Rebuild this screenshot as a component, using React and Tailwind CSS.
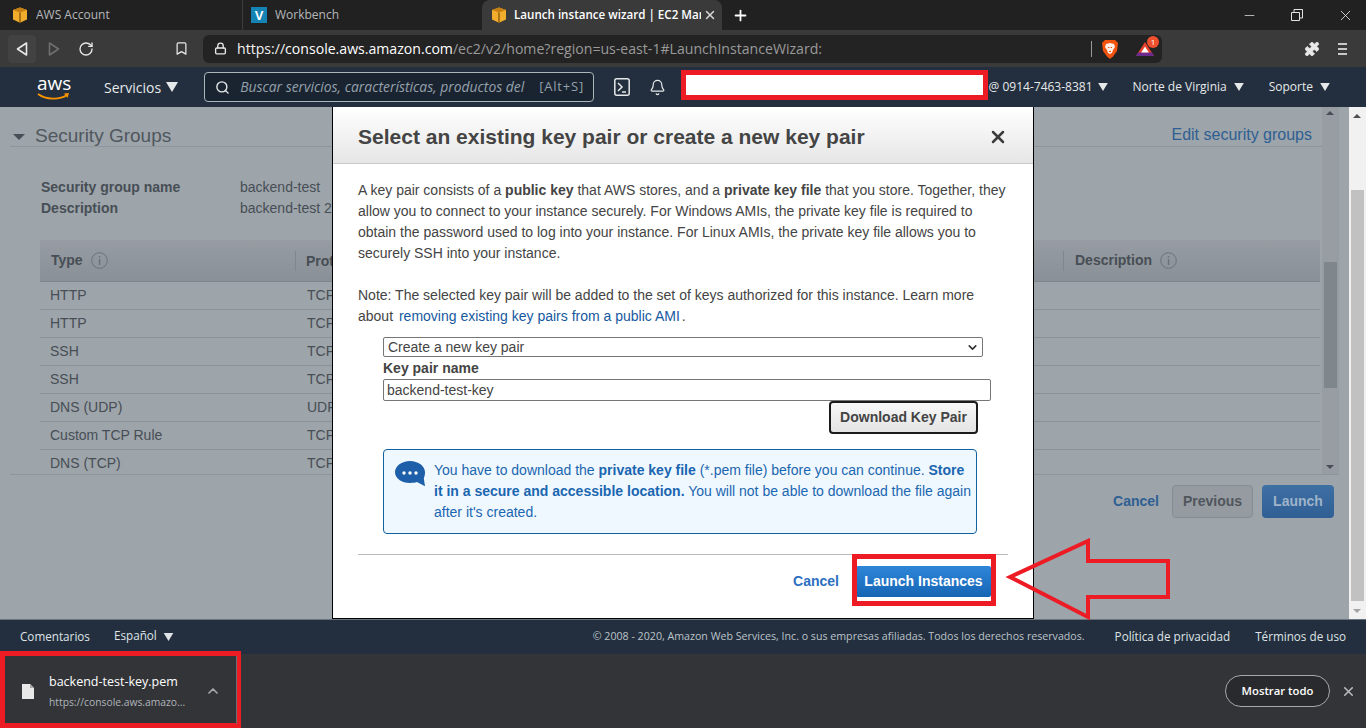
import { Lock, Bookmark, RotateCw, Search, Bell, Puzzle, Plus, X, ChevronUp, ChevronDown, Minus } from 'lucide-react';

const UI = 'font-["Open_Sans",sans-serif]';
const ARIAL = 'font-["Liberation_Sans",Arial,sans-serif]';

const rows = [
  ['HTTP', 'TCP'],
  ['HTTP', 'TCP'],
  ['SSH', 'TCP'],
  ['SSH', 'TCP'],
  ['DNS (UDP)', 'UDP'],
  ['Custom TCP Rule', 'TCP'],
  ['DNS (TCP)', 'TCP'],
];

function Caret({ className = '' }) {
  return (
    <svg className={className} width="12" height="10" viewBox="0 0 12 10">
      <path d="M0 0h12L6 10z" fill="currentColor" />
    </svg>
  );
}

function AwsCube({ className = '' }) {
  return (
    <svg className={className} width="16" height="16" viewBox="0 0 16 16">
      <path d="M8 0.5 15 3v9.5L8 15.8 1 12.5V3z" fill="#f2ad2d" />
      <path d="M1 3l7 2.6L15 3 8 0.5z" fill="#c67f12" />
      <path d="M7.4 5.4h1.2v10.2H7.4z" fill="#7a4c08" />
    </svg>
  );
}

function InfoIcon() {
  return (
    <svg width="17" height="17" viewBox="0 0 17 17" className="shrink-0 text-[#6b7279]">
      <circle cx="8.5" cy="8.5" r="7.8" fill="none" stroke="currentColor" />
      <rect x="7.8" y="7" width="1.5" height="6" fill="currentColor" />
      <rect x="7.8" y="4" width="1.5" height="1.6" fill="currentColor" />
    </svg>
  );
}

function Tab({ icon, title, active, className = '' }) {
  return (
    <div className={`relative flex items-center h-[30px] shrink-0 ${className}`}>
      {icon}
      <span className={`whitespace-nowrap overflow-hidden ${active ? 'ml-[7px] w-[187px] text-[11.6px] text-white font-semibold' : 'ml-[8px] text-[12px] text-[#b5b8bb]'}`}>
        {title}
      </span>
      {active && <X size={14} strokeWidth={2.5} className="absolute right-[5px] top-[8px] text-[#d8d8d8]" />}
    </div>
  );
}

function TabBar() {
  return (
    <div className={`flex items-center h-[30px] bg-[#212121] ${UI}`}>
      <Tab icon={<AwsCube className="shrink-0" />} title="AWS Account" className="w-[243px] pl-[12px] border-r border-[#3d3d3d]" />
      <Tab
        icon={
          <span className={`flex items-center justify-center w-[16px] h-[16px] shrink-0 bg-[#1583b4] text-white text-[13px] font-bold leading-none ${ARIAL}`}>V</span>
        }
        title="Workbench"
        className="w-[239px] pl-[8px]"
      />
      <Tab
        icon={<AwsCube className="shrink-0" />}
        title="Launch instance wizard | EC2 Management Console"
        active
        className="w-[240px] pl-[9px] bg-[#3a3a3a] rounded-t-lg"
      />
      <Plus size={17} strokeWidth={2.5} className="ml-[10px] text-white" />
      <div className="ml-auto flex items-center text-[#e4e4e4]">
        <Minus size={15} strokeWidth={1.2} className="mr-[34px]" />
        <svg width="12" height="12" viewBox="0 0 12 12" className="mr-[34px]" fill="none" stroke="currentColor">
          <path d="M0.5 3.5h8v8h-8zM3 3V0.5h8.5V9H9" />
        </svg>
        <X size={17} strokeWidth={1.2} className="mr-[12px]" />
      </div>
    </div>
  );
}

function BraveLion() {
  return (
    <svg width="16" height="20" viewBox="0 0 16 20">
      <path d="M3 1h10l3 3-1 8-4 5.5L8 20l-3-2.5L1 12 0 4z" fill="#f1530f" />
      <path d="M4 5l4-1 4 1 1 3-2 3-1 3-2 1-2-1-1-3-2-3z" fill="#fff" opacity="0.9" />
      <path d="M6 8.5h1.4M8.6 8.5H10M7 12.5h2" stroke="#f1530f" strokeWidth="1.2" />
    </svg>
  );
}

function Toolbar() {
  return (
    <div className={`flex items-center h-[37px] bg-[#3a3a3a] ${UI}`}>
      <div className="flex items-center justify-center ml-[8px] w-[28px] h-[28px] rounded bg-[#424242]">
        <svg width="12" height="14" viewBox="0 0 12 14" fill="none" stroke="#e8e8e8" strokeWidth="1.6" strokeLinejoin="round">
          <path d="M10.5 1v12L1.5 7z" />
        </svg>
      </div>
      <svg width="12" height="14" viewBox="0 0 12 14" fill="none" stroke="#6f6f6f" strokeWidth="1.6" strokeLinejoin="round" className="ml-[12px]">
        <path d="M1.5 1v12l9-6z" />
      </svg>
      <RotateCw size={16} strokeWidth={2} className="ml-[18px] text-[#e8e8e8]" />
      <Bookmark size={15} strokeWidth={2} className="ml-[80px] text-[#e8e8e8]" />
      <div className="flex items-center ml-[14px] w-[959px] h-[28px] rounded-md bg-[#232323]">
        <Lock size={13} strokeWidth={2.5} className="ml-[11px] text-[#e8e8e8]" />
        <span className="ml-[10px] text-[14.1px] whitespace-nowrap text-[#9a9a9a]">
          <span className="text-[#f0f0f0]">https://</span>
          <span className="text-white">console.aws.amazon.com</span>/ec2/v2/home?region=us-east-1#LaunchInstanceWizard:
        </span>
        <div className="ml-auto flex items-center">
          <span className="w-px h-[16px] bg-[#9a9a9a]" />
          <span className="ml-[10px] flex"><BraveLion /></span>
          <span className="relative ml-[18px] mr-[8px] flex">
            <svg width="18" height="16" viewBox="0 0 18 16">
              <path d="M9 1l9 14H0z" fill="#e8412c" />
              <path d="M0 15h18l-2.2-3.4H2.2z" fill="#6a2a8e" />
              <path d="M9 5.5l3.8 6H5.2z" fill="#fff" />
            </svg>
            <span className="absolute -top-[5px] -right-[5px] flex items-center justify-center w-[12px] h-[12px] rounded-full bg-[#f1502f] text-white text-[8px] leading-none">1</span>
          </span>
        </div>
      </div>
      <Puzzle size={16} fill="#e8e8e8" strokeWidth={1} className="ml-[142px] text-[#e8e8e8]" />
      <div className="ml-[18px] flex flex-col gap-[3px]">
        <span className="w-[9px] h-[2px] bg-[#c8c8c8]" />
        <span className="w-[9px] h-[2px] bg-[#c8c8c8]" />
        <span className="w-[9px] h-[2px] bg-[#c8c8c8]" />
      </div>
    </div>
  );
}

function AwsNav() {
  return (
    <div className={`relative flex items-center h-[40px] bg-[#232f3e] text-[#e6e9ea] ${UI}`}>
      <div className="relative ml-[37px] w-[34px] h-[30px]">
        <span className="absolute left-0 top-[-1px] text-[19px] leading-[24px] text-white">aws</span>
        <svg width="34" height="10" viewBox="0 0 34 10" className="absolute left-0 top-[20px]">
          <path d="M1 2c8 6 22 6 29 1" fill="none" stroke="#f79400" strokeWidth="1.7" />
          <path d="M27 1.5l5-0.5-1.5 5z" fill="#f79400" />
        </svg>
      </div>
      <span className="ml-[33px] text-[14px]">Servicios</span>
      <Caret className="ml-[5px]" />
      <div className="flex items-center ml-[26px] w-[390px] h-[30px] rounded-sm border border-[#aab7b8] bg-[#1a2431]">
        <Search size={15} strokeWidth={2.2} className="ml-[10px]" />
        <span className="ml-[10px] w-[284px] text-[13.9px] italic text-[#95a1ab] whitespace-nowrap">Buscar servicios, características, productos del</span>
        <span className="ml-[15px] text-[13px] tracking-[0.8px] text-[#95a1ab] whitespace-nowrap">[Alt+S]</span>
      </div>
      <svg width="16" height="18" viewBox="0 0 16 18" className="ml-[20px]" fill="none" stroke="currentColor" strokeWidth="1.5">
        <rect x="0.8" y="0.8" width="14.4" height="16.4" rx="2" />
        <path d="M4 5l4 4-4 4M8 14h4" />
      </svg>
      <Bell size={17} strokeWidth={1.7} className="ml-[19px]" />
      <div className="ml-auto mr-[36px] flex items-center text-[12px]">
        <span>@ 0914-7463-8381</span>
        <Caret className="ml-[5px] w-[10px] h-[8px]" />
        <span className="ml-[25px]">Norte de Virginia</span>
        <Caret className="ml-[7px] w-[10px] h-[8px]" />
        <span className="ml-[25px]">Soporte</span>
        <Caret className="ml-[7px] w-[10px] h-[8px]" />
      </div>
      {/* red box the author drew over the account name */}
      <div className="absolute left-[681px] top-[3px] w-[307px] h-[30px] border-[5px] border-[#ed1c24] bg-white" />
    </div>
  );
}

function PageBehind() {
  return (
    <div className={`flex-1 min-w-0 h-full bg-[#9da4aa] text-[#474e55] ${ARIAL}`}>
      <div className="flex h-[367px]">
        <div className="flex-1 min-w-0 pl-[10px]">
          <div className="flex items-center h-[40px] pt-[19px] border-b border-[#8e959b]">
            <svg width="12" height="6" viewBox="0 0 12 6" className="ml-[3px] mt-[2px]">
              <path d="M0 0h12L6 6z" fill="#474e55" />
            </svg>
            <span className="ml-[10px] text-[19px] text-[#50575e]">Security Groups</span>
            <span className="ml-auto mr-[10px] -mt-[3px] text-[16px] text-[#2e5f92]">Edit security groups</span>
          </div>
          <div className="mt-[30px] ml-[31px] text-[14px] leading-[21px]">
            <div className="flex">
              <b className="w-[199px]">Security group name</b>
              <span>backend-test</span>
            </div>
            <div className="flex">
              <b className="w-[199px]">Description</b>
              <span>backend-test 2</span>
            </div>
          </div>
          <div className="ml-[30px] mr-[2px] mt-[21px]">
            <div className="flex items-center h-[42px] bg-gradient-to-b from-[#969ca2] to-[#8a9097] border-b border-[#7f868c] text-[14px] font-bold">
              <span className="flex items-center gap-[8px] w-[256px] pl-[11px] h-[20px] border-r border-[#7f868c]">
                Type <InfoIcon />
              </span>
              <span className="w-[768px] pl-[10px] h-[20px] border-r border-[#7f868c]">Protocol</span>
              <span className="flex items-center gap-[8px] pl-[11px]">
                Description <InfoIcon />
              </span>
            </div>
            {rows.map((r, i) => (
              <div key={i} className={`flex items-center h-[28px] text-[14px] border-b ${i < rows.length - 1 ? 'border-[#8a9197]' : 'border-transparent'}`}>
                <span className="w-[256px] pl-[10px]">{r[0]}</span>
                <span className="pl-[11px]">{r[1]}</span>
              </div>
            ))}
          </div>
        </div>
        <div className="relative w-[17px] shrink-0 bg-[#979da3]">
          <span className="absolute left-[4px] top-[4px] w-0 h-0 border-x-[4px] border-x-transparent border-b-[4px] border-b-[#474e55]" />
          <span className="absolute left-[2px] top-[155px] w-[13px] h-[126px] bg-[#7f868c]" />
          <span className="absolute left-[4px] bottom-[5px] w-0 h-0 border-x-[4px] border-x-transparent border-t-[4px] border-t-[#474e55]" />
        </div>
        <div className="w-[10px] shrink-0" />
      </div>
      <div className="ml-[10px] mr-[10px] border-t border-[#8e959b]" />
      <div className="flex items-center justify-end h-[33px] mt-[10px] mr-[15px] text-[14px] font-bold">
        <span className="text-[#2e5f92]">Cancel</span>
        <span className="flex items-center justify-center ml-[13px] w-[81px] h-[33px] rounded border border-[#868d93] bg-[#959ba1] text-[#50565c]">Previous</span>
        <span className="flex items-center justify-center ml-[9px] w-[72px] h-[33px] rounded bg-gradient-to-b from-[#3f70a4] to-[#2f5f94] text-[#9fb4c9]">Launch</span>
      </div>
    </div>
  );
}

function PageScrollbar() {
  return (
    <div className="relative w-[17px] h-full shrink-0 bg-[#f1f1f1]">
      <span className="absolute left-[4px] top-[7px] w-0 h-0 border-x-[4px] border-x-transparent border-b-[4px] border-b-[#505050]" />
      <span className="absolute left-[2px] top-[83px] w-[13px] h-[411px] bg-[#c1c1c1]" />
      <span className="absolute left-[4px] bottom-[6px] w-0 h-0 border-x-[4px] border-x-transparent border-t-[4px] border-t-[#a3a3a3]" />
    </div>
  );
}

function KeyPairModal() {
  return (
    <div className={`absolute left-[332px] top-0 w-[702px] h-[512px] bg-white border-x border-b border-black text-[#444444] ${ARIAL}`}>
      <div className="flex items-center justify-between h-[57px] pl-[25px] pr-[25px] pt-[3px] bg-gradient-to-b from-[#ffffff] to-[#e6e6e6] border-b border-[#c8c8c8]">
        <span className="text-[21px] font-bold">Select an existing key pair or create a new key pair</span>
        <X size={20} strokeWidth={3} className="text-[#3c3c3c]" />
      </div>
      <div className="pl-[25px] pr-[25px] pt-[16px] text-[14px] leading-[21px]">
        <p>
          A key pair consists of a <b>public key</b> that AWS stores, and a <b>private key file</b> that you store. Together, they allow you to connect to your instance securely. For Windows AMIs, the private key file is required to obtain the password used to log into your instance. For Linux AMIs, the private key file allows you to securely SSH into your instance.
        </p>
        <p className="mt-[21px]">
          Note: The selected key pair will be added to the set of keys authorized for this instance. Learn more about <span className="ml-[2px] mr-[2px] text-[#16599f]">removing existing key pairs from a public AMI</span>.
        </p>
        <div className="ml-[25px] mt-[10px]">
          <div className="flex items-center justify-between w-[600px] h-[20px] pl-[4px] pr-[3px] rounded-[2px] border border-[#767676]">
            Create a new key pair
            <ChevronDown size={13} strokeWidth={3} className="text-[#333]" />
          </div>
          <div className="mt-[1px] font-bold">Key pair name</div>
          <div className="flex items-center w-[608px] h-[22px] pl-[3px] rounded-[2px] border border-[#767676]">backend-test-key</div>
          <div className="flex justify-end w-[595px]">
            <span className="flex items-center justify-center w-[149px] h-[33px] rounded border-2 border-[#1b1b1b] bg-gradient-to-b from-[#f8f8f8] to-[#e4e4e4] font-bold">Download Key Pair</span>
          </div>
          <div className="flex w-[594px] h-[85px] mt-[15px] rounded border border-[#11629f] bg-[#f0f8ff] text-[#1a66b0]">
            <svg width="30" height="27" viewBox="0 0 30 27" className="shrink-0 ml-[11px] mt-[11px]">
              <path d="M15 0c8.3 0 15 5 15 11.3 0 2.4-.5 4.5-1.2 6l1.2 8-8-4.2c-2 .6-4.5 .9-7 .9C6.7 22 0 17.5 0 11.3 0 5 6.7 0 15 0z" fill="#1d5fa8" />
              <circle cx="9" cy="12" r="1.7" fill="#fff" />
              <circle cx="15" cy="12" r="1.7" fill="#fff" />
              <circle cx="21" cy="12" r="1.7" fill="#fff" />
            </svg>
            <p className="ml-[9px] mr-[4px] mt-[10px]">
              You have to download the <b>private key file</b> (*.pem file) before you can continue. <b>Store it in a secure and accessible location.</b> You will not be able to download the file again after it's created.
            </p>
          </div>
        </div>
      </div>
      <div className="mx-[25px] mt-[20px] border-t border-[#bcbcbc]" />
      <div className="flex items-center justify-end h-[31px] mt-[11px] mr-[42px] font-bold text-[14px]">
        <span className="text-[#2b70c0]">Cancel</span>
        <span className="flex items-center justify-center ml-[17px] w-[135px] h-[31px] rounded-[2px] bg-gradient-to-b from-[#2e86d8] to-[#1565b4] text-white">Launch Instances</span>
      </div>
    </div>
  );
}

function Footer() {
  return (
    <div className={`flex items-center h-[35px] border-t border-[#6b747d] bg-[#232f3e] text-[11.7px] text-[#dfe3e6] ${UI}`}>
      <span className="ml-[20px]">Comentarios</span>
      <span className="ml-[24px] -mt-[2px]">Español</span>
      <Caret className="ml-[6px] w-[11px] h-[8px]" />
      <span className="ml-auto text-[10.65px] text-[#bcc3c9]">© 2008 - 2020, Amazon Web Services, Inc. o sus empresas afiliadas. Todos los derechos reservados.</span>
      <span className="ml-[30px]">Política de privacidad</span>
      <span className="ml-[25px] mr-[20px]">Términos de uso</span>
    </div>
  );
}

function DownloadBar() {
  return (
    <div className={`relative flex items-center h-[74px] bg-[#333438] ${UI}`}>
      <svg width="12" height="15" viewBox="0 0 12 15" className="ml-[22px] shrink-0">
        <path d="M0 0h8l4 4v11H0z" fill="#e8e8e8" />
        <path d="M8 0v4h4z" fill="#a8a8a8" />
      </svg>
      <div className="ml-[15px] w-[145px] mt-[1px]">
        <div className="text-[12.5px] leading-[18px] text-white">backend-test-key.pem</div>
        <div className="mt-[4px] text-[10.3px] leading-[15px] text-[#b0b4b8] whitespace-nowrap">https://console.aws.amazo...</div>
      </div>
      <ChevronUp size={16} strokeWidth={2.5} className="ml-[11px] text-[#a8a8a8]" />
      <div className="ml-auto flex items-center">
        <span className="flex items-center justify-center w-[105px] h-[32px] rounded-full border border-[#a8a8a8] bg-[#292a2d] text-[11.3px] font-semibold text-white">Mostrar todo</span>
        <X size={15} strokeWidth={2.5} className="ml-[11px] mr-[10px] text-[#b8b8b8]" />
      </div>
      {/* annotation around the downloaded file */}
      <div className="absolute left-0 top-[-3px] w-[241px] h-[77px] border-[5px] border-r-[4px] border-[#ed1c24] pointer-events-none" />
      <span className="absolute left-[236px] top-[2px] w-px h-[68px] bg-[#6e6e6e]" />
    </div>
  );
}

export default function App() {
  return (
    <div className="w-[1366px] h-[728px] overflow-hidden flex flex-col bg-[#333438]">
      <TabBar />
      <Toolbar />
      <AwsNav />
      <div className="relative flex h-[512px]">
        <PageBehind />
        <PageScrollbar />
        <KeyPairModal />
        {/* annotations: box round the button and the big arrow */}
        <div className="absolute left-[852px] top-[447px] w-[144px] h-[52px] border-[5px] border-[#ed1c24]" />
        <svg width="170" height="84" viewBox="0 0 170 84" className="absolute left-[1005px] top-[431px]" fill="none">
          <path d="M5 39 83 3v20h80v36H83v20z" stroke="#ed1c24" strokeWidth="4" strokeLinejoin="miter" />
        </svg>
      </div>
      <Footer />
      <DownloadBar />
    </div>
  );
}
